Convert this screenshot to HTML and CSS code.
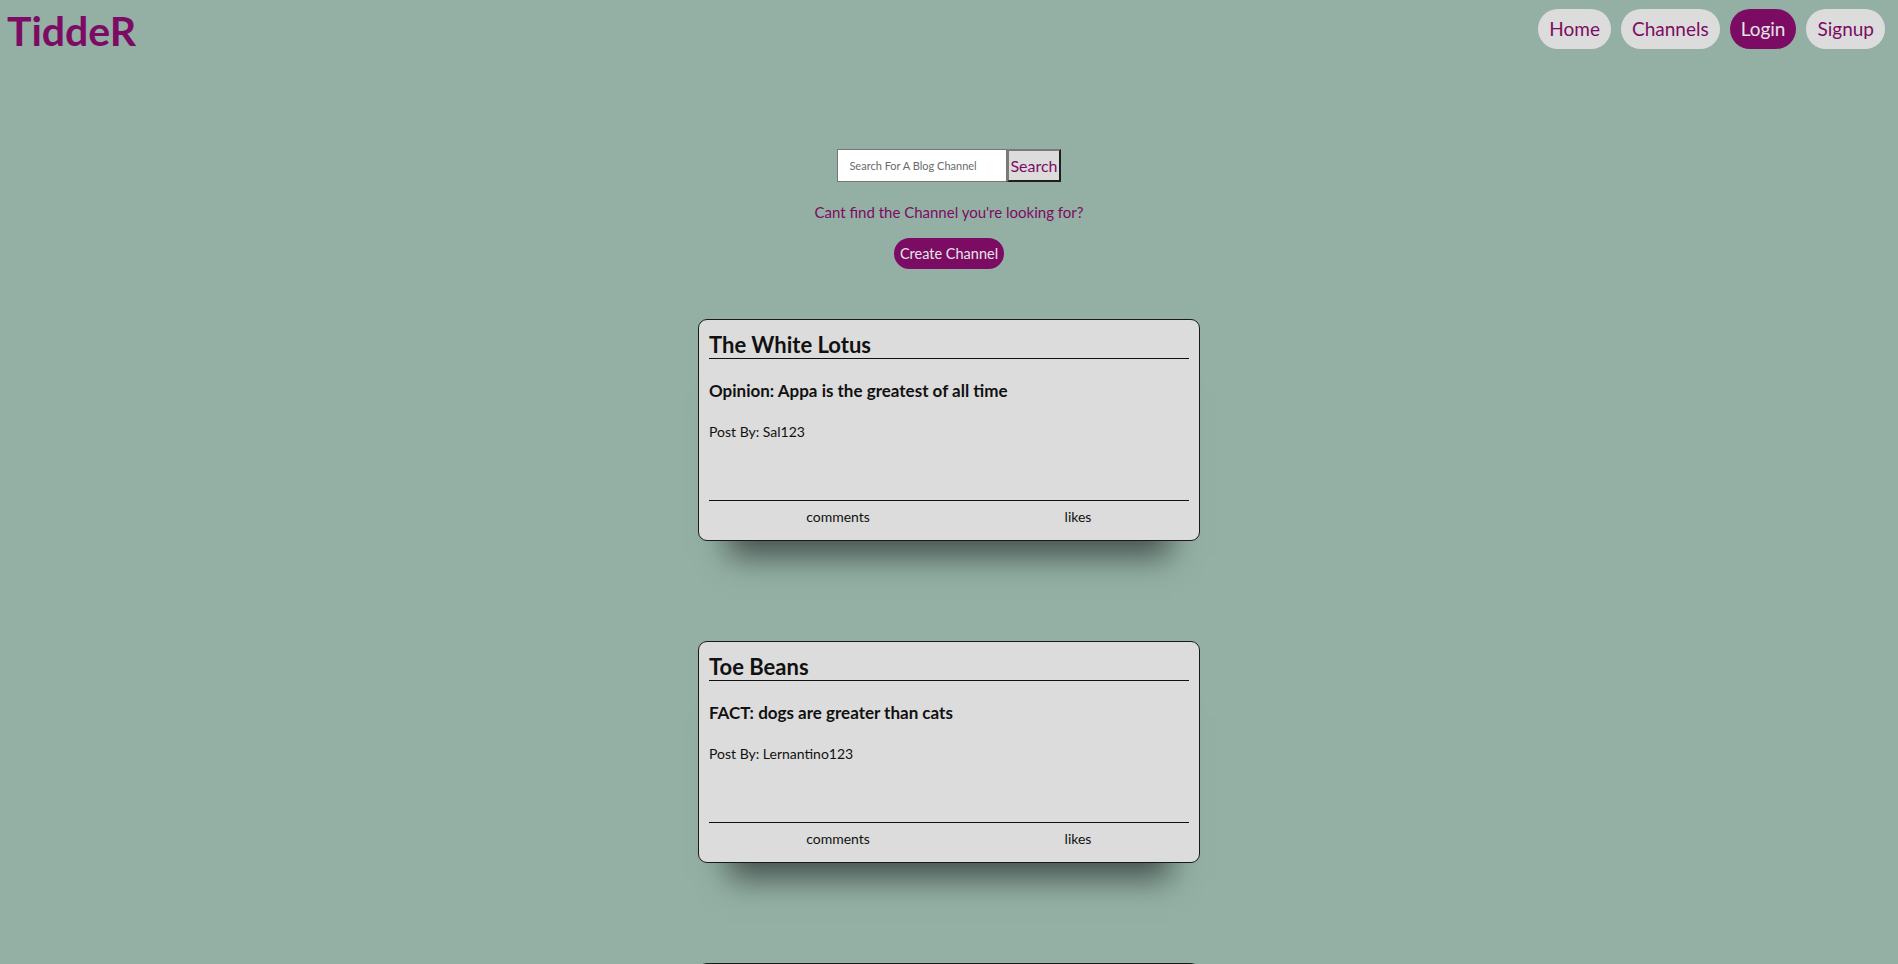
FILE: index.html
```html
<!DOCTYPE html>
<html lang="en">
<head>
<meta charset="utf-8">
<title>TiddeR</title>
<link rel="stylesheet" href="styles.css">
</head>
<body>
<header class="topbar">
  <h1 class="logo">TiddeR</h1>
  <nav class="nav">
    <a class="nav-btn">Home</a>
    <a class="nav-btn">Channels</a>
    <a class="nav-btn nav-btn-active">Login</a>
    <a class="nav-btn">Signup</a>
  </nav>
</header>
<main class="main">
  <form class="search">
    <input class="search-input" type="text" placeholder="Search For A Blog Channel">
    <button class="search-btn" type="button">Search</button>
  </form>
  <p class="cant-find">Cant find the Channel you're looking for?</p>
  <button class="create-btn" type="button">Create Channel</button>
  <section class="posts">
    <article class="card">
      <h2 class="card-title">The White Lotus</h2>
      <h3 class="card-heading">Opinion: Appa is the greatest of all time</h3>
      <p class="card-author">Post By: Sal123</p>
      <div class="card-footer">
        <span class="card-stat">comments</span>
        <span class="card-stat">likes</span>
      </div>
    </article>
    <article class="card">
      <h2 class="card-title">Toe Beans</h2>
      <h3 class="card-heading">FACT: dogs are greater than cats</h3>
      <p class="card-author">Post By: Lernantino123</p>
      <div class="card-footer">
        <span class="card-stat">comments</span>
        <span class="card-stat">likes</span>
      </div>
    </article>
    <article class="card">
      <h2 class="card-title">Cabbage Corp</h2>
      <h3 class="card-heading">My cabbages!</h3>
      <p class="card-author">Post By: Sal123</p>
      <div class="card-footer">
        <span class="card-stat">comments</span>
        <span class="card-stat">likes</span>
      </div>
    </article>
  </section>
</main>
</body>
</html>
```

FILE: styles.css
```css
html, body {
  margin: 0;
  padding: 0;
}

body {
  background: #94b0a5;
  font-family: Lato, "Open Sans", "Liberation Sans", sans-serif;
  color: #111;
}

.topbar {
  display: flex;
  justify-content: space-between;
  align-items: flex-start;
  padding: 0 13px 0 7px;
}

.logo {
  margin: 7px 0 0 0;
  font-size: 41px;
  line-height: 48px;
  font-weight: 700;
  color: #7c0b63;
}

.nav {
  display: flex;
  gap: 10px;
  margin-top: 9px;
}

.nav-btn {
  display: block;
  height: 40px;
  line-height: 40px;
  padding: 0 11px;
  border-radius: 20px;
  background: #dcdcdc;
  color: #7c0b63;
  font-size: 19px;
  cursor: pointer;
}

.nav-btn-active {
  background: #7c0b63;
  color: #e4e4e4;
}

.main {
  display: flex;
  flex-direction: column;
  align-items: center;
}

.search {
  display: flex;
  margin: 94px 0 0 0;
}

.search-input {
  box-sizing: border-box;
  width: 170px;
  height: 33px;
  margin: 0;
  padding: 0 0 0 11px;
  border: 1px solid #767676;
  background: #fff;
  font-family: inherit;
  font-size: 11px;
}

.search-input::placeholder {
  color: #6a6a6a;
}

.search-btn {
  box-sizing: border-box;
  height: 33px;
  margin: 0;
  padding: 0 1px;
  border: 2px solid;
  border-color: #7a7a7a #1e1e1e #1e1e1e #7a7a7a;
  background: #dcdcdc;
  color: #7c0b63;
  font-family: inherit;
  font-size: 16px;
}

.cant-find {
  margin: 21px 0 0 0;
  font-size: 15px;
  line-height: 18px;
  color: #7c0b63;
}

.create-btn {
  box-sizing: border-box;
  height: 31px;
  margin: 17px 0 0 0;
  padding: 0 6px;
  border: none;
  border-radius: 16px;
  background: #7c0b63;
  color: #e6e6e6;
  font-family: inherit;
  font-size: 14.5px;
}

.posts {
  display: flex;
  flex-direction: column;
  gap: 100px;
  margin-top: 50px;
  padding-bottom: 60px;
}

.card {
  box-sizing: border-box;
  display: flex;
  flex-direction: column;
  width: 502px;
  height: 222px;
  padding: 0 10px;
  border: 1px solid #1a1a1a;
  border-radius: 9px;
  background: #dcdcdc;
  box-shadow: 0 45px 30px -30px rgba(0, 0, 0, 0.55);
}

.card-title {
  margin: 12px 0 0 0;
  font-size: 22px;
  line-height: 26px;
  font-weight: 700;
  border-bottom: 1px solid #111;
}

.card-heading {
  margin: 22px 0 0 0;
  font-size: 17px;
  line-height: 20px;
  font-weight: 700;
}

.card-author {
  margin: 22px 0 0 0;
  font-size: 14px;
  line-height: 17px;
}

.card-footer {
  display: grid;
  grid-template-columns: 1fr 1fr;
  margin-top: auto;
  padding: 7px 0 15px 0;
  border-top: 1px solid #111;
  font-size: 14px;
  line-height: 17px;
}

.card-stat {
  padding-left: 18px;
  text-align: center;
}
```
